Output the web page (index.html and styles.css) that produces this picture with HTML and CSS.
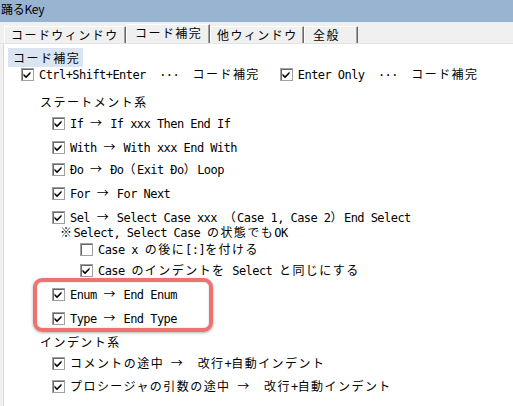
FILE: index.html
```html
<!DOCTYPE html>
<html lang="ja">
<head>
<meta charset="utf-8">
<title>踊るKey</title>
<link rel="stylesheet" href="styles.css">
</head>
<body>
<div class="title">踊るKey</div>
<div class="tabs">
  <div class="tab t1"><span class="j">コードウィンドウ</span></div>
  <div class="tab t2 sel"><span class="j">コード補完</span></div>
  <div class="tab t3"><span class="j">他ウィンドウ</span></div>
  <div class="tab t4"><span class="j">全般</span></div>
</div>
<div class="panel">
  <div class="head"><span class="j">コード補完</span></div>

  <div class="row l1 first">
    <span class="cb on"><svg viewBox="0 0 11 11" width="11" height="11"><polygon points="1.5,4.5 4,7 8.5,2.5 8.5,4.8 4,9.3 1.5,6.8"/></svg></span>
    <span class="tx">Ctrl+Shift+Enter  ···  <span class="j">コード補完</span></span>
    <span class="cb on gap"><svg viewBox="0 0 11 11" width="11" height="11"><polygon points="1.5,4.5 4,7 8.5,2.5 8.5,4.8 4,9.3 1.5,6.8"/></svg></span>
    <span class="tx">Enter Only  ···  <span class="j">コード補完</span></span>
  </div>

  <div class="row sec mt14"><span class="tx"><span class="j">ステートメント系</span></span></div>

  <div class="row l2 mt7">
    <span class="cb on"><svg viewBox="0 0 11 11" width="11" height="11"><polygon points="1.5,4.5 4,7 8.5,2.5 8.5,4.8 4,9.3 1.5,6.8"/></svg></span>
    <span class="tx">If <span class="j">→</span> If xxx Then End If</span>
  </div>
  <div class="row l2">
    <span class="cb on"><svg viewBox="0 0 11 11" width="11" height="11"><polygon points="1.5,4.5 4,7 8.5,2.5 8.5,4.8 4,9.3 1.5,6.8"/></svg></span>
    <span class="tx">With <span class="j">→</span> With xxx End With</span>
  </div>
  <div class="row l2 mt8">
    <span class="cb on"><svg viewBox="0 0 11 11" width="11" height="11"><polygon points="1.5,4.5 4,7 8.5,2.5 8.5,4.8 4,9.3 1.5,6.8"/></svg></span>
    <span class="tx">Đo <span class="j">→</span> Đo<span class="j">（</span>Exit Đo<span class="j">）</span>Loop</span>
  </div>
  <div class="row l2">
    <span class="cb on"><svg viewBox="0 0 11 11" width="11" height="11"><polygon points="1.5,4.5 4,7 8.5,2.5 8.5,4.8 4,9.3 1.5,6.8"/></svg></span>
    <span class="tx">For <span class="j">→</span> For Next</span>
  </div>
  <div class="row l2">
    <span class="cb on"><svg viewBox="0 0 11 11" width="11" height="11"><polygon points="1.5,4.5 4,7 8.5,2.5 8.5,4.8 4,9.3 1.5,6.8"/></svg></span>
    <span class="tx">Sel <span class="j">→</span> Select Case xxx <span class="j">（</span>Case 1, Case 2<span class="j">）</span>End Select</span>
  </div>
  <div class="row note mt1">
    <span class="tx"><span class="j">※</span>Select, Select Case <span class="j">の状態でも</span>OK</span>
  </div>
  <div class="row l3 mt3">
    <span class="cb"></span>
    <span class="tx">Case x <span class="j">の後に</span>[:]<span class="j">を付ける</span></span>
  </div>
  <div class="row l3 mt7">
    <span class="cb on"><svg viewBox="0 0 11 11" width="11" height="11"><polygon points="1.5,4.5 4,7 8.5,2.5 8.5,4.8 4,9.3 1.5,6.8"/></svg></span>
    <span class="tx">Case <span class="j">のインデントを</span> Select <span class="j">と同じにする</span></span>
  </div>
  <div class="row l2">
    <span class="cb on"><svg viewBox="0 0 11 11" width="11" height="11"><polygon points="1.5,4.5 4,7 8.5,2.5 8.5,4.8 4,9.3 1.5,6.8"/></svg></span>
    <span class="tx">Enum <span class="j">→</span> End Enum</span>
  </div>
  <div class="row l2">
    <span class="cb on"><svg viewBox="0 0 11 11" width="11" height="11"><polygon points="1.5,4.5 4,7 8.5,2.5 8.5,4.8 4,9.3 1.5,6.8"/></svg></span>
    <span class="tx">Type <span class="j">→</span> End Type</span>
  </div>

  <div class="row sec"><span class="tx"><span class="j">インデント系</span></span></div>

  <div class="row l2 mt7">
    <span class="cb on"><svg viewBox="0 0 11 11" width="11" height="11"><polygon points="1.5,4.5 4,7 8.5,2.5 8.5,4.8 4,9.3 1.5,6.8"/></svg></span>
    <span class="tx"><span class="j">コメントの途中</span> <span class="j">→</span>  <span class="j">改行</span>+<span class="j">自動インデント</span></span>
  </div>
  <div class="row l2 mt9">
    <span class="cb on"><svg viewBox="0 0 11 11" width="11" height="11"><polygon points="1.5,4.5 4,7 8.5,2.5 8.5,4.8 4,9.3 1.5,6.8"/></svg></span>
    <span class="tx"><span class="j">プロシージャの引数の途中</span> <span class="j">→</span>  <span class="j">改行</span>+<span class="j">自動インデント</span></span>
  </div>
</div>
<div class="hl"></div>
</body>
</html>
```
FILE: styles.css
```css
* { box-sizing: border-box; }
html, body { margin: 0; padding: 0; }
body {
  width: 513px;
  height: 406px;
  overflow: hidden;
  position: relative;
  display: flex;
  flex-direction: column;
  background: #f0f0f0;
  color: #000;
  font-family: "DejaVu Sans Mono", "Liberation Mono", monospace;
  font-size: 12px;
  letter-spacing: -0.55px;
}
.j {
  font-family: "Noto Sans CJK JP", sans-serif;
  font-size: 12px;
  letter-spacing: 1.45px;
}
.title {
  height: 22px;
  flex: none;
  background: #99b4d1;
  font-family: "Noto Sans CJK JP", sans-serif;
  font-size: 12px;
  line-height: 18px;
  padding-left: 1px;
  letter-spacing: -0.3px;
}
.tabs {
  height: 22px;
  flex: none;
  display: flex;
  align-items: flex-end;
  padding-left: 4px;
  border-bottom: 1px solid #e3e3e3;
}
.tab {
  height: 17px;
  display: flex;
  align-items: center;
  padding-left: 6px;
  border-top: 1px solid #fff;
  border-left: 1px solid #fff;
  border-right: 1px solid #696969;
  box-shadow: inset -1px 0 0 #a0a0a0;
  line-height: 1;
}
.tab.sel { height: 19px; padding-bottom: 2px; padding-left: 8px; }
.t1 { width: 122px; }
.t2 { width: 84px; }
.t3 { width: 94px; }
.t4 { width: 54px; padding-left: 8px; }
.panel {
  flex: 1;
  margin-left: 3px;
  border-left: 1px solid #d9d9d9;
  background: #fff;
  display: flex;
  flex-direction: column;
}
.head {
  margin: 4px 0 0 4px;
  width: 75px;
  height: 19px;
  background: #dbe5f1;
  padding-left: 5px;
  display: flex;
  align-items: center;
}
.row {
  display: flex;
  align-items: center;
  height: 14px;
  margin-top: 10px;
}
.row.first { margin-top: 0; }
.row.mt1 { margin-top: 1px; }
.row.mt3 { margin-top: 3px; }
.row.mt7 { margin-top: 7px; }
.row.mt8 { margin-top: 8px; }
.row.mt9 { margin-top: 9px; }
.row.mt14 { margin-top: 14px; }
.l1 { padding-left: 17px; }
.sec { padding-left: 36px; }
.l2 { padding-left: 48px; }
.note { padding-left: 56px; }
.l3 { padding-left: 76px; }
.tx { white-space: pre; line-height: 14px; }
.cb {
  flex: none;
  width: 13px;
  height: 13px;
  margin-right: 5px;
  border: 1px solid #a0a0a0;
  box-shadow: inset 1px 1px 0 #696969;
  background: #fff;
  display: flex;
}
.cb svg { display: block; fill: #000; }
.cb.gap { margin-left: 20px; }
.hl {
  position: absolute;
  left: 33px;
  top: 278px;
  width: 180px;
  height: 54px;
  border: 4px solid #ef7272;
  border-radius: 9px;
  box-shadow: 0 1px 3px rgba(0, 0, 0, 0.3), inset 0 0 2px rgba(0, 0, 0, 0.2);
}
```
